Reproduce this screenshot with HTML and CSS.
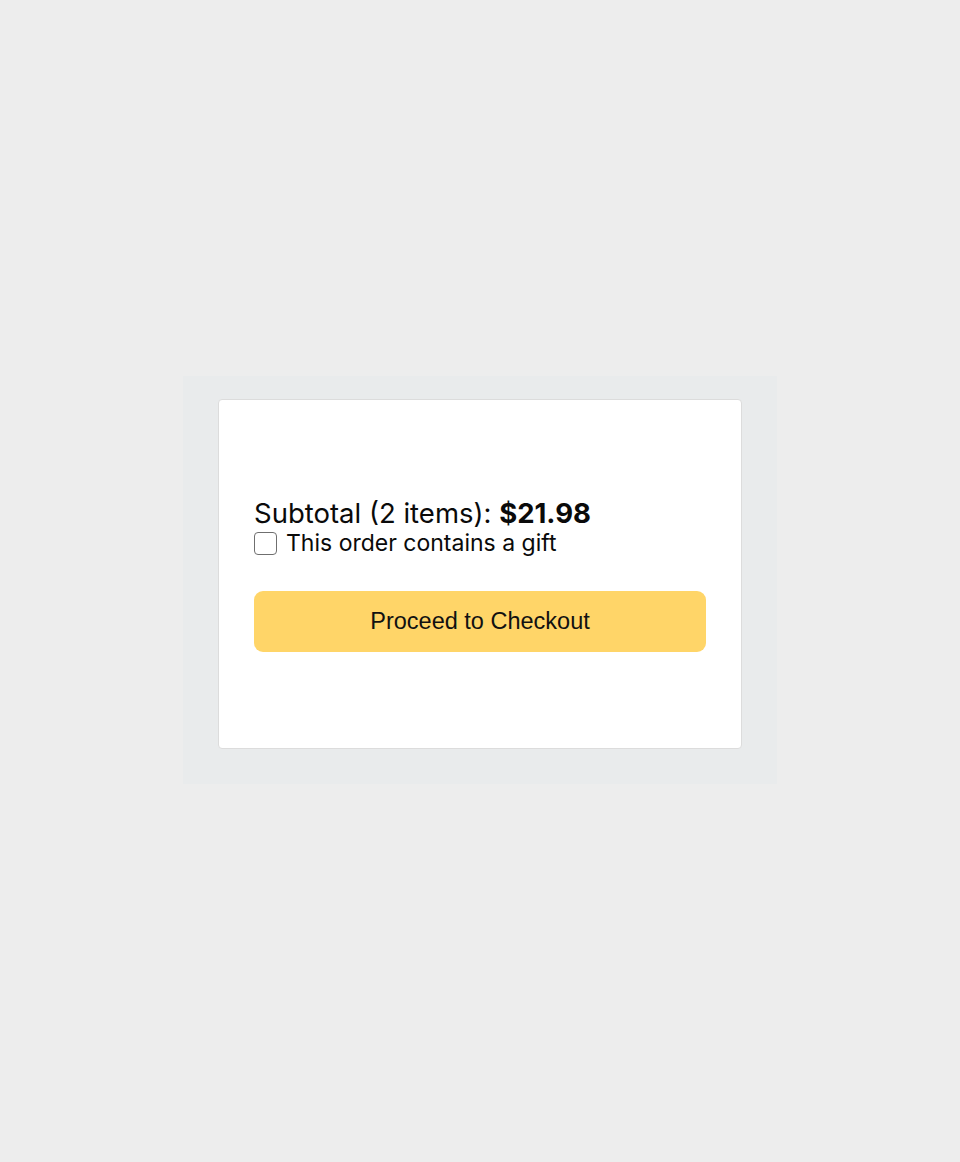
FILE: index.html
```html
<!DOCTYPE html>
<html>
<head>
<meta charset="utf-8">
<link rel="stylesheet" href="styles.css">
</head>
<body>
<div class="page">
  <div class="panel">
    <div class="card">
      <div class="subtotal">Subtotal (2 items): <b>$21.98</b></div>
      <label class="gift"><input type="checkbox" class="box"><span>This order contains a gift</span></label>
      <button class="checkout">Proceed to Checkout</button>
    </div>
  </div>
</div>
</body>
</html>
```
FILE: styles.css
```css
html, body { margin: 0; padding: 0; }
body { background: #ededed; font-family: Inter, "Liberation Sans", sans-serif; }
.page { height: 1162px; display: flex; align-items: center; justify-content: center; }
.panel { width: 594px; box-sizing: border-box; padding: 23px 35px 35px; background: #e9ebec; margin-top: -2px; }
.card { box-sizing: border-box; width: 524px; height: 350px; background: #fff; border: 1px solid #dcdcdc; border-radius: 4px; padding: 97px 35px 0; display: flex; flex-direction: column; }
.subtotal { font-size: 27.5px; line-height: 32px; color: #0a0a0a; }
.subtotal b { font-weight: 700; }
.gift { display: flex; align-items: center; gap: 9px; font-size: 23px; line-height: 28px; color: #0a0a0a; }
.box { appearance: none; -webkit-appearance: none; margin: 0; width: 23px; height: 23px; box-sizing: border-box; border: 1.5px solid #6f6f6f; border-radius: 4px; background: #fff; }
.checkout { margin-top: 34px; height: 61px; width: 100%; border: none; border-radius: 9px; background: #ffd568; font-family: "Liberation Sans", Arial, sans-serif; font-size: 23.5px; color: #111; }
```
